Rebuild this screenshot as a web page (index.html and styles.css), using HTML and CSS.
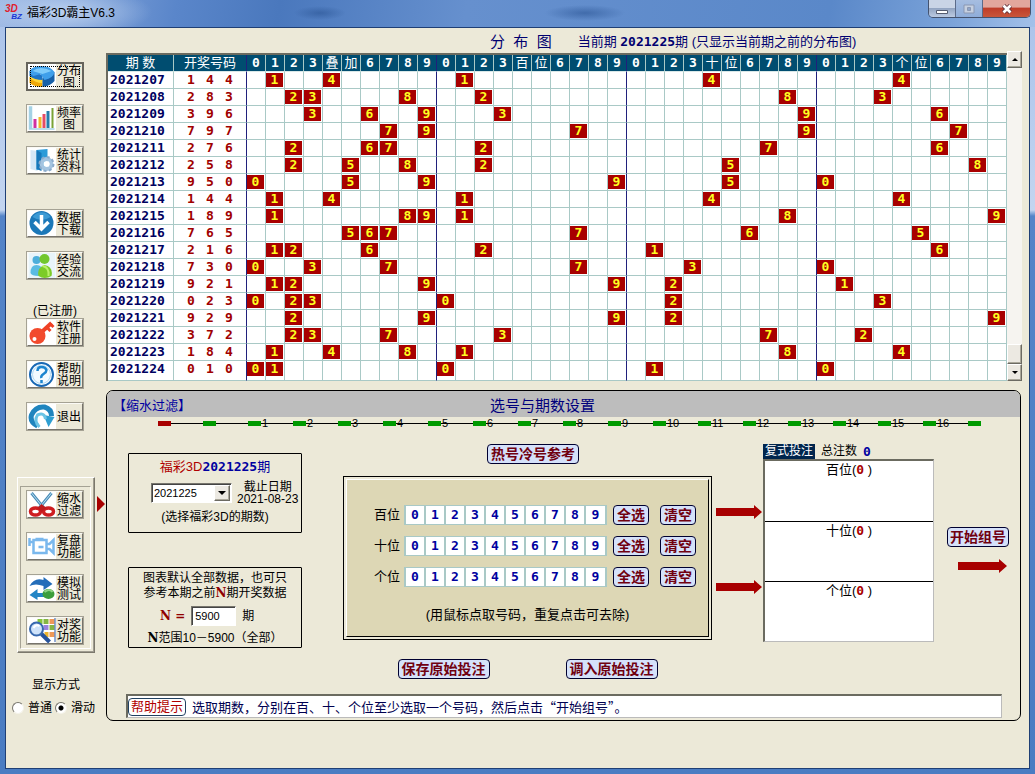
FILE: index.html
```html
<!DOCTYPE html>
<html lang="zh-CN">
<head>
<meta charset="utf-8">
<title>福彩3D霸主V6.3</title>
<link rel="stylesheet" href="styles.css">
</head>
<body>
<header class="titlebar">
  <div class="logo"><b>3D</b><b>BZ</b></div>
  <h1>福彩3D霸主V6.3</h1>
  <div class="winbtns">
    <button aria-label="最小化"><svg viewBox="0 0 14 12"><path d="M1.500 7.500h11v3h-11z" fill="#fff" stroke="#555c70"/></svg></button>
    <button class="dim" aria-label="最大化"><svg viewBox="0 0 14 12"><path d="M2 2h10v8H2z" fill="#c6d0e0" stroke="#8a97b2"/><path d="M5.500 4.500h3v3h-3z" fill="#8fa5c8" stroke="#8a97b2"/></svg></button>
    <button class="close" aria-label="关闭"><svg viewBox="0 0 14 12"><path d="M3.500 2.500l7 7M10.500 2.500l-7 7" stroke="#5d3038" stroke-width="4.500"/><path d="M3.500 2.500l7 7M10.500 2.500l-7 7" stroke="#fff" stroke-width="2.800"/></svg></button>
  </div>
</header>
<main class="client">
  <nav class="side">
    <div class="group">
      <button class="tool focus"><svg viewBox="0 0 27 25"><path d="M1 13v6q5 4 13 4V15z" fill="#f0a808"/><path d="M1 13l7-3 6 5v4Q6 19 1 13z" fill="#ffd737"/><path d="M14 14v9q8-1 12-6V8z" fill="#1760a8"/><path d="M1 7v5q5 4 13 4V11z" fill="#1e74c4"/><path d="M1 7Q4 2 13 2t13 6q-1 6-10 8l-4-6-7 2Q1 10 1 7z" fill="#3f9fea"/><path d="M4 7q8-6 19 0l-9 3z" fill="#7ecbfa"/></svg><span>分布<br>图</span></button>
      <button class="tool"><svg viewBox="0 0 27 25"><path d="M2 1v22h24M1 1h2v22H1z" stroke="#a5d2e5" stroke-width="1.500" fill="none"/><path d="M5 13h3v9H5z" fill="#d12fa0"/><path d="M10 11h3v11h-3z" fill="#f2b72a"/><path d="M14 8h3v14h-3z" fill="#e64b66"/><path d="M18 5h3v17h-3z" fill="#267cac"/><path d="M23 2h2v20h-2z" fill="#7ba335"/></svg><span>频率<br>图</span></button>
      <button class="tool"><svg viewBox="0 0 27 25"><path d="M2 2l7 1v20l-7-2z" fill="#d4e8f6"/><path d="M8 2l11-1v19L8 22z" fill="#2c9bd8"/><path d="M8 2l5 3v18l-5-2z" fill="#1678ba"/><circle cx="18" cy="16" r="5" fill="none" stroke="#a4c4e0" stroke-width="4"/><circle cx="18" cy="16" r="7" fill="none" stroke="#8caccc" stroke-width="2" stroke-dasharray="3 2.500"/><circle cx="18" cy="16" r="3" fill="#fff"/></svg><span>统计<br>资料</span></button>
    </div>
    <div class="group">
      <button class="tool"><svg viewBox="0 0 27 25"><circle cx="13" cy="12" r="12" fill="#1c78b8"/><path d="M4 6a11 11 0 0 1 18 0q-9 6-18 0" fill="#3b9ad4"/><path d="M13 4v13M6 11l7 7 7-7" fill="none" stroke="#fff" stroke-width="3.500"/></svg><span>数据<br>下载</span></button>
      <button class="tool"><svg viewBox="0 0 27 25"><path d="M0 0h27v25H0z" fill="#e8f4fa"/><circle cx="8" cy="7" r="4" fill="#4caedb"/><path d="M2 20q0-8 6-8t7 8l-5 3q-7 0-8-3" fill="#5abbe2"/><circle cx="16" cy="6" r="5" fill="#72c72e"/><path d="M10 23q-2-8 6-11 9 2 7 11-7 4-13 0z" fill="#7ccb28"/><path d="M14 13q7 1 6 10" stroke="#baf069" stroke-width="2" fill="none"/></svg><span>经验<br>交流</span></button>
    </div>
    <p class="reg">(已注册)</p>
    <div class="group">
      <button class="tool"><svg viewBox="0 0 27 25"><path d="M11 14L23 3" stroke="#ef4126" stroke-width="4"/><path d="M18 7l4 4M22 4l3 3" stroke="#ef4126" stroke-width="3"/><circle cx="9" cy="16" r="8" fill="#f24a2d"/><circle cx="6" cy="19" r="2" fill="#fff"/></svg><span>软件<br>注册</span></button>
      <button class="tool"><svg viewBox="0 0 27 25"><circle cx="13" cy="12.500" r="11.500" fill="#f3faff" stroke="#1767b4" stroke-width="2"/><circle cx="13" cy="12.500" r="9" fill="none" stroke="#b2daf5"/><path d="M9 9q0-4 4-4t5 3q0 2-3 4t-2 4M13 18v3" fill="none" stroke="#1b84cf" stroke-width="2.500"/></svg><span>帮助<br>说明</span></button>
      <button class="tool"><svg viewBox="0 0 27 25"><path d="M9 22Q1 18 3 11 7 2 16 3q7 2 7 9" fill="none" stroke="#2085be" stroke-width="5"/><path d="M15 11l11 2-6 10z" fill="#2f9fd2"/><path d="M11 23Q5 17 9 11q7-3 8 4" fill="none" stroke="#6ac4e5" stroke-width="3"/></svg><span>退出</span></button>
    </div>
    <div class="modes">
      <div class="modes-in">
        <button class="tool"><svg viewBox="0 0 27 25"><path d="M3 1l13 16M23 1L10 17" stroke="#4b8cb8" stroke-width="3"/><path d="M3 1l13 16M23 1L10 17" stroke="#b8e1f2"/><ellipse cx="7" cy="19.500" rx="5" ry="3.500" fill="none" stroke="#ce1d21" stroke-width="3.500"/><ellipse cx="20" cy="19.500" rx="5" ry="3.500" fill="none" stroke="#ce1d21" stroke-width="3.500"/><path d="M9 16l4-4 5 4-5 4z" fill="#bd1b1e"/></svg><span>缩水<br>过滤</span></button>
        <button class="tool"><svg viewBox="0 0 27 25"><path d="M1 4v8M1 8h4M5 6h13v13H5zM18 10h3l4-4v13l-4-4h-3M10 13h5M7 5h8" fill="none" stroke="#7ab8ed" stroke-width="2.500"/></svg><span>复盘<br>功能</span></button>
        <button class="tool"><svg viewBox="0 0 27 25"><path d="M1 10Q6 1 15 4V1l9 7-9 6v-4Q7 7 1 10z" fill="#236db9"/><path d="M15 17H9v-4l-8 6 8 5v-3h8z" fill="#2385c5"/><ellipse cx="20" cy="18" rx="6" ry="5" fill="#3c9e3c"/><path d="M16 16q5-4 8 0" stroke="#8fd384" stroke-width="2" fill="none"/></svg><span>模拟<br>测试</span></button>
        <button class="tool"><svg viewBox="0 0 27 25"><path d="M9 1h5v5H9z" fill="#86c63b"/><path d="M15 1h5v5h-5zM21 7h5v5h-5z" fill="#85b543"/><path d="M21 1h5v5h-5zM21 14h5v5h-5z" fill="#ee9857"/><path d="M15 7h5v5h-5z" fill="#9982de"/><path d="M16 14h4v5h-4z" fill="#efb52c"/><path d="M26.500 0v24" stroke="#2956a8"/><circle cx="8" cy="11" r="6.500" fill="#cfe3fa" stroke="#3768ae" stroke-width="2"/><path d="M5 10q2-4 6-2" stroke="#fff" stroke-width="2" fill="none"/><path d="M13 16l8 8" stroke="#26539b" stroke-width="4"/></svg><span>对奖<br>功能</span></button>
      </div>
      <i class="pointer"></i>
    </div>
    <fieldset class="display">
      <legend>显示方式</legend>
      <label><input type="radio" name="mode">普通</label>
      <label><input type="radio" name="mode" checked>滑动</label>
    </fieldset>
  </nav>
  <div class="work">
    <div class="caption"><h2>分  布  图</h2><p>当前期 <b>2021225</b>期 (只显示当前期之前的分布图)</p></div>
    <div class="chart">
      <table><colgroup><col class="c-period"><col class="c-num"><col span="40"></colgroup><thead></thead><tbody></tbody></table>
      <div class="scroll">
        <button aria-label="向上"><i class="tri up"></i></button>
        <div class="track"><i class="thumb"></i></div>
        <button aria-label="向下"><i class="tri"></i></button>
      </div>
    </div>
    <section class="panel">
      <div class="panel-head"><strong>【缩水过滤】</strong><h2>选号与期数设置</h2></div>
      <ol class="steps"></ol>
      <div class="stage">
        <div class="left">
          <div class="box issue">
            <p class="issue-title">福彩3D<b>2021225</b><span>期</span></p>
            <div class="issue-row">
              <div class="combo"><select aria-label="期数"><option>2021225</option></select><span class="drop"><i class="tri"></i></span></div>
              <p>截止日期<br><small>2021-08-23</small></p>
            </div>
            <p>(选择福彩3D的期数)</p>
          </div>
          <div class="box range">
            <p>图表默认全部数据，也可只<br>参考本期之前<b class="n red">N</b>期开奖数据</p>
            <label><b class="n red">N =</b><input class="field" type="text" value="5900">期</label>
            <p><b class="n">N</b>范围10－5900（全部）</p>
          </div>
        </div>
        <div class="middle">
          <button class="cmd hot">热号冷号参考</button>
          <div class="frame"><div class="picker">
            <div class="rows"></div>
            <p>(用鼠标点取号码，重复点击可去除)</p>
          </div></div>
          <div class="saves"><button class="cmd">保存原始投注</button><button class="cmd">调入原始投注</button></div>
        </div>
        <div class="arrows">
          <svg viewBox="0 0 46 14"><path d="M0 3h38V0l8 7-8 7v-3H0z"/></svg>
          <svg viewBox="0 0 46 14"><path d="M0 3h38V0l8 7-8 7v-3H0z"/></svg>
        </div>
        <div class="result">
          <p class="total"><mark>复式投注</mark><span>总注数</span><b>0</b></p>
          <div class="lists"><div>百位(<b>0</b> )</div><div>十位(<b>0</b> )</div><div>个位(<b>0</b> )</div></div>
        </div>
        <div class="start"><button class="cmd">开始组号</button><svg viewBox="0 0 49 14"><path d="M0 3h41V0l8 7-8 7v-3H0z"/></svg></div>
      </div>
      <div class="help"><button>帮助提示</button><p>选取期数，分别在百、十、个位至少选取一个号码，然后点击“开始组号”。</p></div>
    </section>
  </div>
</main>
<script src="app.js"></script>
</body>
</html>
```
FILE: styles.css
```css
* { box-sizing: border-box; }
body {
  --cjk: "Liberation Sans", "Noto Sans CJK SC", sans-serif;
  --num: "DejaVu Sans Mono", "Noto Sans CJK SC", monospace;
  margin: 0; min-height: 100vh; display: flex; flex-direction: column;
  font: 12px/16px var(--cjk); color: #000;
  background: linear-gradient(#a9c2ea 0, #c3d5f0 210px, #5484c8 216px, #4a7cc2 100%);
}
h1, h2, p, ol { margin: 0; padding: 0; font-weight: normal; }
button, select, input { font: inherit; margin: 0; padding: 0; }
svg { display: block; flex: none; }

.titlebar {
  height: 27px; display: flex; align-items: flex-start; padding: 4px 4px 0 5px; gap: 5px;
  background:
    radial-gradient(ellipse 26px 7px at 320px 13px, #2b559599, #2b559500),
    radial-gradient(ellipse 40px 8px at 585px 13px, #2b559599, #2b559500),
    radial-gradient(ellipse 90px 26px at 62px 12px, #b9cfee, #b9cfee00),
    linear-gradient(100deg, #9db8e4 0, #5a86ca 17%, #4a78bd 27%, #6690ce 45%, #5a88c9 80%, #7ba3d9 92%, #a3c1ea 100%);
}
.logo { width: 17px; height: 17px; display: flex; flex-direction: column; font-style: italic; }
.logo b { font-size: 10px; line-height: 9px; color: #e0202c; }
.logo b + b { font-size: 8px; line-height: 8px; color: #1838d8; text-align: right; }
.titlebar h1 { flex: 1; font-size: 12px; line-height: 18px; }
.winbtns { display: flex; height: 18px; margin-top: -4px; border: 1px solid #44536f; border-top: 0; border-radius: 0 0 5px 5px; overflow: hidden; }
.winbtns button { width: 27px; border: 0; border-right: 1px solid #5b6b8a; display: grid; place-items: center; background: linear-gradient(#c9d4e6 0 45%, #93a5c2 50%, #bccbe2); }
.winbtns .dim { background: linear-gradient(#a6bde0, #8fadd9); }
.winbtns .close { width: 47px; border-right: 0; background: linear-gradient(#e2a79d 0 40%, #bf3e2a 50%, #c9563a); }
.winbtns svg { width: 14px; height: 12px; }

.client { flex: 1; margin: 0 5px 5px; border: 1px solid #1f3f75; display: flex; background: #ece9d8; padding-right: 7px; }
.side { width: 100px; flex: none; padding-top: 34px; }
.group { display: flex; flex-direction: column; gap: 13px; margin: 0 0 34px 20px; }
.tool { width: 58px; height: 29px; border: 2px solid; border-color: #fbfaf5 #76736b #76736b #fbfaf5; outline: 1px solid #a5a294; outline-offset: -1px; background: #ece9d8; display: flex; align-items: center; font-size: 12px; line-height: 12px; text-align: left; }
.tool svg { width: 28px; height: 25px; background: #fff; }
.tool span { width: 26px; text-align: center; }
.tool.focus { outline: 2px solid #66645c; outline-offset: -2px; position: relative; }
.tool.focus::after { content: ""; position: absolute; inset: 2px; border: 1px dotted #000; }
.reg { text-align: center; margin: -10px 2px 0 0; line-height: 14px; }
.modes { position: relative; width: 78px; margin: 0 0 0 11px; padding: 8px 3px 3px 2px; border: 1px solid; border-color: #fff #7b786c #7b786c #fff; box-shadow: inset -1px -1px #9f9c90; }
.group + .modes { margin-top: 46px; }
.modes-in { border: 1px solid; border-color: #a5a294 #fff #fff #a5a294; padding: 3px 0 3px 5px; display: flex; flex-direction: column; gap: 13px; }
.pointer { position: absolute; left: 79px; top: 18px; border: 8px solid transparent; border-left-color: #a80000; border-right: 0; }
.display { margin: 24px 0 0 6px; padding: 0; border: 0; display: flex; gap: 3px; }
.display legend { padding: 0 0 7px 20px; }
.display label { display: flex; align-items: center; gap: 4px; }
.display input { appearance: none; width: 12px; height: 12px; border-radius: 50%; border: 1px solid; border-color: #77756d #f5f3ea #f5f3ea #77756d; background: #fff; }
.display input:checked { background: radial-gradient(circle, #000 2px, #fff 3px); }

.work { flex: 1; min-width: 0; }
.caption { height: 25px; display: flex; align-items: center; padding: 3px 0 0 384px; gap: 26px; color: #000070; white-space: nowrap; font-size: 13px; }
.caption h2 { font-size: 15px; white-space: pre; }
.caption b, .issue-title b { font: bold 13px/16px var(--num); }

.chart { display: flex; height: 328px; }
table { flex: 1; min-width: 0; width: 100%; table-layout: fixed; border-spacing: 0; border: solid #6b6b60; border-width: 2px 0 0 2px; background: #fff; font: bold 13px/14px var(--num); }
.c-period { width: 66px; }
.c-num { width: 73px; }
th, td { height: 17px; padding: 0; border: solid #a9c9c6; border-width: 0 1px 1px 0; text-align: center; overflow: hidden; white-space: nowrap; }
thead th { background: #004d70; color: #fff; font-weight: normal; font-family: var(--cjk); border-bottom-color: #d9e8e8; }
thead th.d { font: bold 13px/14px var(--num); }
th.g:not(:last-child), td.g:not(:last-child) { border-right-color: #20207c; }
tbody th { color: #000060; text-align: left; padding-left: 2px; }
tbody td { color: #a00000; }
tbody tr:last-child > * { height: 20px; vertical-align: top; padding-top: 1px; }
td span { display: inline-block; width: 19px; }
td i { display: block; width: 17px; height: 14px; background: #a80000; color: #ff2; font-style: normal; }
.scroll { width: 15px; margin-top: -2px; display: flex; flex-direction: column; }
.scroll button, .thumb, .drop { border: 1px solid; border-color: #fff #6c6a62 #6c6a62 #fff; box-shadow: inset -1px -1px #aaa79a; background: #ece9e2; }
.scroll button { height: 17px; display: grid; place-items: center; }
.track { flex: 1; display: flex; flex-direction: column; justify-content: flex-end; background: #f6f4f0; }
.thumb { height: 20px; }
.tri { display: block; border: 3px solid transparent; border-top-color: #000; border-bottom: 0; }
.tri.up { transform: rotate(180deg); }

.panel { margin: 9px 1px 0 0; border: 1px solid #000; border-radius: 7px; overflow: hidden; padding-bottom: 2px; }
.panel-head { height: 26px; display: grid; grid-template-columns: 1fr auto 1fr; align-items: center; padding: 4px 48px 0 6px; background: #bdbdbd; }
.panel-head strong { font-weight: normal; font-size: 13px; color: #0000a0; }
.panel-head h2 { font-size: 15px; color: #00007c; }
.steps { display: flex; list-style: none; margin: 0 39px 0 51px; height: 12px; font-size: 11px; line-height: 12px; }
.steps li { flex: 1 1 0; display: flex; background: linear-gradient(#000, #000) 0 6px / 100% 1px no-repeat; }
.steps li::before { content: ""; flex: none; width: 13px; height: 5px; margin: 4px 1px 0 0; background: #009a00; }
.steps li:first-child::before { background: #a80000; }
.steps li:last-child { flex: 0 0 13px; }
.steps li:last-child::before { margin-right: 0; }

.stage { display: flex; margin: 15px 11px 0 21px; height: 250px; }
.left { width: 174px; padding-top: 9px; display: flex; flex-direction: column; gap: 34px; }
.box { border: 1px solid #000; border-radius: 1px; text-align: center; white-space: nowrap; }
.issue { height: 80px; padding-top: 5px; }
.issue-title { font-size: 13px; color: #b00000; }
.issue-title b, .issue-title span { color: #0000a0; }
.issue-row { display: flex; padding: 2px 0 0 22px; gap: 5px; line-height: 12px; height: 34px; align-items: center; }
.issue-row small { font-size: 12px; }
.combo { width: 81px; height: 20px; position: relative; }
select { width: 100%; height: 100%; appearance: none; border-radius: 0; font-size: 11px; padding-left: 2px; }
select, .field { border: 1px solid; border-color: #77756d #fff #fff #77756d; background: #fff; box-shadow: inset 1px 1px #444; color: #000; }
.drop { position: absolute; right: 2px; top: 2px; bottom: 2px; width: 16px; display: grid; place-items: center; pointer-events: none; }
.drop .tri { border-width: 4px 4px 0; }
.range { height: 81px; padding-top: 3px; line-height: 15px; }
.range label { display: flex; padding-left: 31px; align-items: center; gap: 6px; height: 30px; }
.field { width: 45px; height: 20px; padding-left: 3px; font-size: 11px; }
.n { font-family: "DejaVu Serif", serif; }
.red { color: #900000; }

.middle { flex: 1; margin: 0 4px 0 41px; display: flex; flex-direction: column; align-items: center; }
.cmd { height: 20px; padding: 0 3px; border: 1px solid #000030; border-radius: 4px; background: #d5e1fa; color: #700010; font-weight: bold; font-size: 14px; line-height: 16px; white-space: nowrap; }
.hot { margin-left: 11px; }
.frame { width: 100%; height: 164px; margin-top: 12px; padding: 2px; border: 1px solid #000; }
.picker { height: 100%; border: solid; border-width: 1px; border-color: #fff #000 #000 #fff; background: #ddd7b5; padding-top: 25px; text-align: center; font-size: 13px; }
.rows { display: flex; flex-direction: column; gap: 11px; padding-left: 15px; }
.row { display: flex; align-items: center; justify-content: center; height: 20px; }
.digits { display: flex; margin: 0 6px 0 4px; border: 1px solid #a9c9c6; border-left-width: 2px; }
.digits button { width: 20px; height: 18px; border: 0; border-right: 2px solid #a9c9c6; background: #fff; color: #0000a0; font: bold 13px/16px var(--num); }
.digits button:last-child { border-right-width: 1px; }
.start .cmd { padding: 0 2px; }
.row .cmd + .cmd { margin-left: 11px; }
.picker p { margin-top: 20px; }
.saves { display: flex; gap: 76px; margin-top: 19px; }
.arrows { width: 46px; padding-top: 61px; display: flex; flex-direction: column; gap: 61px; fill: #a80000; }
.arrows svg { height: 14px; }
.result { width: 171px; margin-left: 1px; font-size: 13px; }
.total { display: flex; gap: 6px; line-height: 15px; height: 15px; font-size: 12px; }
.total mark { background: #00254d; color: #fff; padding: 0 2px; }
.total b { font: bold 13px/15px var(--num); color: #0000a0; }
.lists { border: solid; border-width: 2px 1px 1px 2px; border-color: #6b6b60 #bbb #bbb #6b6b60; background: #fff; text-align: center; white-space: pre; }
.lists div { height: 60px; padding-top: 1px; }
.lists div + div { border-top: 1px solid #000; }
.lists b { font: bold 13px/16px var(--num); color: #a80000; }
.start { margin: 83px 0 0 13px; display: flex; flex-direction: column; align-items: flex-end; gap: 12px; }
.start svg { width: 49px; height: 14px; margin-right: 2px; fill: #a80000; }
.help { height: 24px; margin: 0 18px 0 19px; border: solid; border-width: 2px 1px 1px 2px; border-color: #6b6b60 #bbb #bbb #6b6b60; background: #fff; display: flex; align-items: center; gap: 6px; font-size: 13px; color: #000050; white-space: nowrap; }
.help p { font-family: "Noto Sans CJK SC", sans-serif; }
.help button { height: 18px; border: 1px solid #204060; border-radius: 4px; padding: 0 2px; line-height: 15px; background: #fff; color: #b00000; }
```
FILE: app.js
```js
const draws = ['144', '283', '396', '797', '276', '258', '950', '144', '189',
  '765', '216', '730', '921', '023', '929', '372', '184', '010'];
const pairs = ['叠加', '百位', '十位', '个位'];
const digits = [...'0123456789'];

const edge = d => (d === '9' ? ' g' : '');

document.querySelector('thead').innerHTML =
  '<tr><th>期 数</th><th class="g">开奖号码</th>' +
  pairs.map(p => digits.map(d => {
    if (d === '4') return `<th>${p[0]}</th>`;
    if (d === '5') return `<th>${p[1]}</th>`;
    return `<th class="d${edge(d)}">${d}</th>`;
  }).join('')).join('') + '</tr>';

document.querySelector('tbody').innerHTML = draws.map((n, i) => {
  const groups = [n, n[0], n[1], n[2]];
  const cells = groups.map(g => digits.map(d =>
    `<td class="${edge(d).trim()}">${g.includes(d) ? `<i>${d}</i>` : ''}</td>`).join('')).join('');
  const nums = [...n].map(c => `<span>${c}</span>`).join('');
  return `<tr><th>${2021207 + i}</th><td class="g">${nums}</td>${cells}</tr>`;
}).join('');

document.querySelector('.steps').innerHTML = Array.from({ length: 19 }, (_, i) =>
  `<li>${i > 1 && i < 18 ? i - 1 : ''}</li>`).join('');

document.querySelector('.rows').innerHTML = pairs.slice(1).map(p =>
  `<div class="row"><span>${p}</span><div class="digits">${
    digits.map(d => `<button>${d}</button>`).join('')
  }</div><button class="cmd">全选</button><button class="cmd">清空</button></div>`).join('');
```
